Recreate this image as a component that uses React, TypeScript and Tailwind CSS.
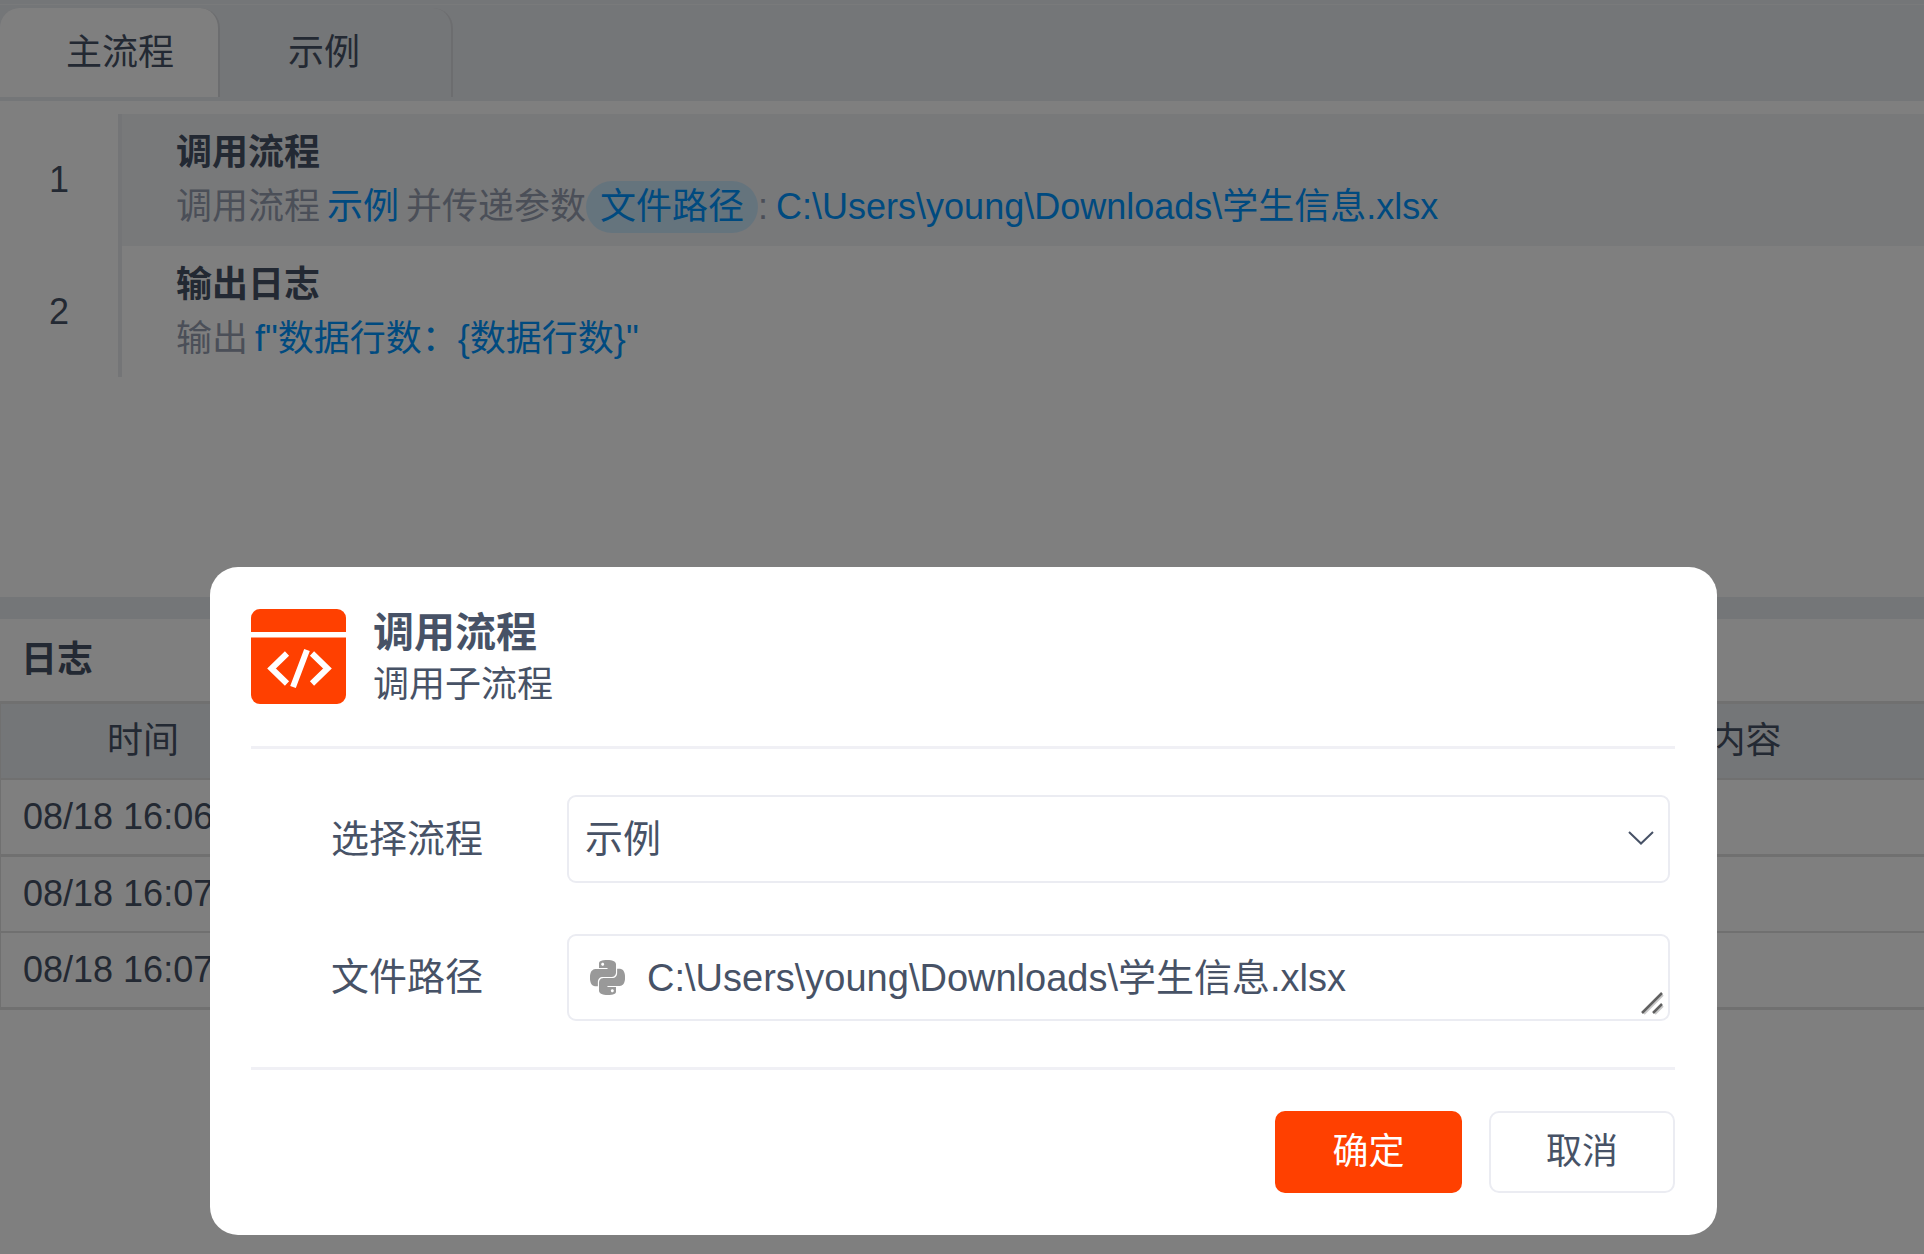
import { SiPython } from "react-icons/si";

const logRows = [
  { time: "08/18 16:06", line: "border-b-[3px] border-[#e0e0e0]", height: "h-[77px]" },
  { time: "08/18 16:07", line: "border-b-2 border-[#e0e0e0]", height: "h-[76px]" },
  { time: "08/18 16:07", line: "border-b-[3px] border-[#e0e0e0]", height: "h-[77px]" },
];

function FlowTabs() {
  return (
    <nav className="flex border-t border-[#f2f4f7] bg-[#e9ecf0] pt-[3px] pb-1" role="tablist">
      <button
        type="button"
        role="tab"
        aria-selected="true"
        className="h-[89px] rounded-t-[20px] border-r-2 border-[#d9dbdf] bg-white pr-[44px] pl-[66px]"
      >
        主流程
      </button>
      <button
        type="button"
        role="tab"
        aria-selected="false"
        className="h-[89px] rounded-tr-[20px] border-r-2 border-[#d9dbdf] pr-[91px] pl-[68px]"
      >
        示例
      </button>
    </nav>
  );
}

function FlowSteps() {
  return (
    <ol className="pt-[13px] leading-[54px]">
      <li className="flex h-[132px]">
        <span className="flex w-[118px] items-center justify-center">1</span>
        <div className="flex-1 border-l-4 border-[#e9ebee] bg-[#f0f2f5] pt-3 pl-[54px]">
          <h3 className="font-bold">调用流程</h3>
          <p className="flex items-center whitespace-nowrap text-[#969eb0]">
            <span>调用流程</span>
            <span className="mx-[7px] text-[#0094ff]">示例</span>
            <span>并传递参数</span>
            <span className="rounded-full bg-[#cbe8fb] px-3.5 leading-[52px] text-[#0094ff]">文件路径</span>
            <span className="mr-2">:</span>
            <span className="text-[#0094ff]">C:\Users\young\Downloads\学生信息.xlsx</span>
          </p>
        </div>
      </li>
      <li className="flex h-[131px]">
        <span className="flex w-[118px] items-center justify-center">2</span>
        <div className="flex-1 border-l-4 border-[#e9ebee] pt-3 pl-[54px]">
          <h3 className="font-bold">输出日志</h3>
          <p className="flex gap-[7px] whitespace-nowrap text-[#969eb0]">
            <span>输出</span>
            <span className="text-[#0094ff]">f"数据行数：{"{数据行数}"}"</span>
          </p>
        </div>
      </li>
    </ol>
  );
}

function LogPanel() {
  return (
    <section className="border-t-[22px] border-[#e9ecf0]">
      <h2 className="flex h-[82px] items-center pl-[21px] font-bold">日志</h2>
      <table className="w-full table-fixed border-separate border-spacing-0 border-l border-[#e0e0e0]">
        <colgroup>
          <col className="w-[284px]" />
          <col />
          <col className="w-[357px]" />
        </colgroup>
        <thead>
          <tr className="bg-[#e9ecf0]">
            <th className="h-[79px] border-t-[3px] border-b-2 border-[#e0e0e0] p-0 font-normal">时间</th>
            <td className="border-t-[3px] border-b-2 border-[#e0e0e0]" />
            <th className="border-t-[3px] border-b-2 border-[#e0e0e0] p-0 font-normal">内容</th>
          </tr>
        </thead>
        <tbody>
          {logRows.map((row, i) => (
            <tr key={i} className={row.height}>
              <td className={`p-0 pl-[22px] ${row.line}`}>{row.time}</td>
              <td className={`p-0 ${row.line}`} />
              <td className={`p-0 ${row.line}`} />
            </tr>
          ))}
        </tbody>
      </table>
    </section>
  );
}

function CodeIcon() {
  return (
    <svg className="size-[95px] shrink-0" viewBox="0 0 95 95" aria-hidden="true">
      <path d="M0 23V9a9 9 0 0 1 9-9h77a9 9 0 0 1 9 9v14z" fill="#ff4000" />
      <path d="M0 28.5h95V86a9 9 0 0 1-9 9H9a9 9 0 0 1-9-9z" fill="#ff4000" />
      <path d="M36 44.500 20.500 59.500 36 74.500M61 44.500 76.500 59.500 61 74.500M56 41 42 78" fill="none" stroke="#fff" strokeWidth="6" />
    </svg>
  );
}

function CallFlowDialog() {
  return (
    <div className="fixed inset-0 flex items-end bg-black/50 pr-[207px] pb-[19px] pl-[210px]">
      <div
        role="dialog"
        aria-modal="true"
        aria-labelledby="dialog-title"
        className="w-full rounded-[28px] bg-white pr-[42px] pl-[41px]"
      >
        <header className="flex items-start gap-[27px] border-b-[3px] border-[#f0f0f5] pt-[42px] pb-[35px]">
          <CodeIcon />
          <div className="-mt-0.5">
            <h1 id="dialog-title" className="text-[41px] leading-[52px] font-bold">调用流程</h1>
            <p className="leading-[52px]">调用子流程</p>
          </div>
        </header>

        <form className="border-b-[3px] border-[#f0f0f5] py-[46px] pr-[5px] pl-20 text-[38px]">
          <div className="flex items-center">
            <label htmlFor="flow" className="w-[236px] shrink-0">选择流程</label>
            <div className="relative flex-1">
              <select
                id="flow"
                className="block h-[88px] w-full appearance-none rounded-[9px] border-2 border-[#ebecf2] bg-white px-4"
              >
                <option>示例</option>
              </select>
              <svg
                className="pointer-events-none absolute top-[36px] right-[16px] h-[14px] w-[26px]"
                viewBox="0 0 26 14"
                fill="none"
                stroke="#475266"
                strokeWidth="2"
                aria-hidden="true"
              >
                <path d="M1 1l12 11.500L25 1" />
              </svg>
            </div>
          </div>

          <div className="mt-[51px] flex items-center">
            <label htmlFor="path" className="w-[236px] shrink-0">文件路径</label>
            <div className="relative flex h-[87px] flex-1 items-center gap-[22px] rounded-[9px] border-2 border-[#ebecf2] pl-[21px]">
              <SiPython className="size-[35px] shrink-0 text-[#999999]" aria-hidden="true" />
              <textarea
                id="path"
                rows={1}
                defaultValue={"C:\\Users\\young\\Downloads\\学生信息.xlsx"}
                className="block h-[56px] flex-1 resize-none overflow-hidden leading-[56px] outline-none"
              />
              <svg
                className="pointer-events-none absolute right-[4px] bottom-[4px] size-[24px]"
                viewBox="0 0 24 24"
                fill="none"
                aria-hidden="true"
              >
                <path d="M4 23 23 4M15 23l8-8" stroke="#c8c8c8" strokeWidth="2" />
                <path d="M2 22 22 2M13 22l9-9" stroke="#606060" strokeWidth="2.500" />
              </svg>
            </div>
          </div>
        </form>

        <footer className="flex justify-end gap-[27px] pt-[41px] pb-[42px]">
          <button type="button" className="h-[82px] w-[187px] rounded-[10px] bg-[#ff4000] text-white">确定</button>
          <button type="button" className="h-[82px] w-[186px] rounded-[10px] border-2 border-[#ebecf2]">取消</button>
        </footer>
      </div>
    </div>
  );
}

export default function App() {
  return (
    <div className="min-h-screen bg-white font-['Liberation_Sans','Noto_Sans_CJK_SC',sans-serif] text-[36px] text-[#475266]">
      <main>
        <div className="bg-[#e9ecf0] pt-1">
          <FlowTabs />
        </div>
        <div className="min-h-[496px]">
          <FlowSteps />
        </div>
        <LogPanel />
      </main>
      <CallFlowDialog />
    </div>
  );
}
